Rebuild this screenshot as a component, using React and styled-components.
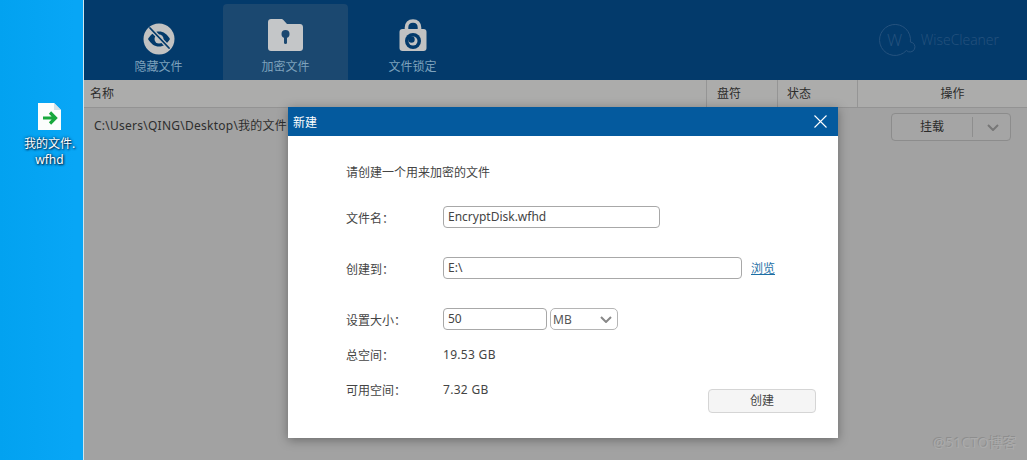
import React from "react";
import styled, { createGlobalStyle } from "styled-components";

const cjk = `"Noto Sans", "Noto Sans CJK SC", sans-serif`;

const Global = createGlobalStyle`
  html, body { margin: 0; padding: 0; background: #a2a2a2; }
  body { font-family: ${cjk}; font-size: 12px; }
  * { box-sizing: border-box; }
`;

const Page = styled.div`
  width: 1027px; height: 460px; display: flex; overflow: hidden; position: relative;
`;
const Desktop = styled.div`
  width: 84px; flex: none; background: linear-gradient(90deg, #02a2f0, #08a6f6 90%);
  border-right: 1px solid #cfe6ee;
  display: flex; flex-direction: column; align-items: center;
  height: 100%;
  padding: 103px 0 0 16px;
`;
const DeskLabel = styled.div`
  color: #fff; font-size: 12px; line-height: 16px; text-align: center; margin-top: 6px; width: 66px;
  text-shadow: 0 0 3px #024, 1px 1px 2px #024;
`;
const AppArea = styled.div`
  flex: 1; display: flex; flex-direction: column; min-width: 0;
`;
const TopBar = styled.div`
  height: 80px; background: #033a6b; display: flex; align-items: flex-end; padding-left: 12px; flex: none;
  justify-content: space-between;
`;
const Tabs = styled.div`display: flex; gap: 2px;`;
const Tab = styled.div`
  width: 125px; height: 76px; display: flex; flex-direction: column; align-items: center;
  padding-top: 13px;
  border-radius: 4px 4px 0 0;
  color: #7ea2bc; font-size: 12px; line-height: 16px;
  background: ${p => (p.$active ? "#1b4870" : "transparent")};
`;
const TabIcon = styled.div`
  height: 39px; display: flex; align-items: flex-start; justify-content: center; margin-bottom: 3px;
  padding-top: ${p => p.$pad}px;
`;
const Logo = styled.div`
  display: flex; align-items: center; gap: 5px; margin: 0 28px 23px 0; color: #25527e;
  font-family: "Open Sans", sans-serif; font-weight: 300; font-size: 14px; line-height: 20px;
`;
const HeaderRow = styled.div`
  height: 28px; background: #acacab; border-bottom: 1px solid #939393; display: grid;
  grid-template-columns: 623px 71px 80px 1fr; flex: none;
  color: #2c2c2c; line-height: 28px;
`;
const HeadCell = styled.div`
  padding-left: ${p => p.$pl}px;
  text-align: ${p => (p.$center ? "center" : "left")};
  border-right: ${p => (p.$last ? "none" : "1px solid #959595")};
  overflow: hidden;
`;
const BodyRow = styled.div`
  flex: 1; background: #a2a2a2; display: flex; align-items: flex-start; justify-content: space-between;
  padding: 5px 16px 0 10px; color: #2e2e2e;
`;
const PathText = styled.div`line-height: 16px; margin-top: 5px; letter-spacing: .25px;`;
const Split = styled.div`
  width: 120px; height: 28px; border: 1px solid #8c8c8c; border-radius: 4px; display: flex; align-items: center; background: #a5a5a5;
`;
const SplitMain = styled.div`flex: 1; text-align: center; border-right: 1px solid #8e8e8e; line-height: 20px; height: 20px; color: #2a2a2a;`;
const SplitArrow = styled.div`width: 37px; display: flex; justify-content: center; align-items: center; padding-left: 3px;`;

const Modal = styled.div`
  position: absolute; left: 288px; top: 107px; width: 550px; height: 331px; background: #fff;
  box-shadow: 0 2px 10px rgba(0,0,0,.35); display: flex; flex-direction: column;
`;
const ModalTitle = styled.div`
  height: 29px; background: #045a9e; color: #fff; display: flex; align-items: center; justify-content: space-between;
  padding: 0 11px 0 5px; font-size: 12px; flex: none;
`;
const ModalBody = styled.div`
  flex: 1; padding: 28px 22px 0 58px; color: #444; display: flex; flex-direction: column; position: relative;
`;
const Intro = styled.div`line-height: 17px; height: 17px; margin-bottom: 25px;`;
const Row = styled.div`
  display: flex; align-items: center; height: ${p => p.$h}px; margin-bottom: ${p => p.$mb || 0}px;
`;
const Label = styled.div`width: 97px; flex: none; padding-top: 1px;`;
const Input = styled.div`
  width: ${p => p.$w}px; height: 22px; border: 1px solid #a8a8a8; border-radius: 4px; padding: 0 4px;
  line-height: 19px; font-size: 12px; color: #444;
`;
const Browse = styled.a`
  margin-left: 9px; padding-top: 2px; color: #1d6fa5; text-decoration: underline; line-height: 16px;
`;
const Select = styled.div`
  width: 68px; height: 22px; border: 1px solid #b5b5b5; border-radius: 5px; margin-left: 3px;
  display: flex; align-items: center; justify-content: space-between; padding: 0 5px 0 2px; color: #555; line-height: 19px;
`;
const Value = styled.div`color: #444; letter-spacing: .3px;`;
const CreateButton = styled.div`
  position: absolute; right: 22px; bottom: 25px; width: 108px; height: 24px; background: #f5f5f5; border: 1px solid #d5d5d5;
  border-radius: 4px; text-align: center; line-height: 21px; color: #444;
`;
const Watermark = styled.div`
  position: absolute; right: 10px; bottom: 8px; color: #ababab; font-size: 14px; line-height: 18px;
  text-shadow: -1px -1px 0 #8e8e8e;
`;

const FileIcon = () => (
  <svg width="23" height="27" viewBox="0 0 23 27">
    <path d="M0 0H16L23 7V27H0Z" fill="#fbfdfc" />
    <path d="M16 0L23 7H16Z" fill="#d6e2e8" />
    <path d="M5 15H17M12 9.500L17.500 15L12 20.500" fill="none" stroke="#17a83c" strokeWidth="3.200" />
  </svg>
);
const EyeIcon = () => (
  <svg width="32" height="32" viewBox="0 0 32 32">
    <circle cx="16" cy="16" r="15.500" fill="#c2c2c2" />
    <path d="M5 16C8 11 11.500 8.500 16 8.500S24 11 27 16C24 21 20.500 23.500 16 23.500S8 21 5 16Z" fill="#033a6b" />
    <circle cx="16" cy="16" r="4.500" fill="#c2c2c2" />
    <path d="M7 5L26 25" stroke="#c2c2c2" strokeWidth="4" />
    <path d="M7 5L26 25" stroke="#033a6b" strokeWidth="1.800" strokeLinecap="round" />
  </svg>
);
const FolderIcon = () => (
  <svg width="35" height="32" viewBox="0 0 35 32">
    <path d="M3 0H13C14 0 15 .5 15.600 1.200L19 5H32C33.700 5 35 6.300 35 8V29C35 30.700 33.700 32 32 32H3C1.300 32 0 30.700 0 29V3C0 1.300 1.300 0 3 0Z" fill="#c4c6c8" />
    <circle cx="17.500" cy="15" r="4" fill="#1b4870" />
    <rect x="16" y="15" width="3" height="10" rx="1.500" fill="#1b4870" />
  </svg>
);
const LockIcon = () => (
  <svg width="28" height="32" viewBox="0 0 28 32">
    <path d="M7.500 12V8.500C7.500 4.500 10 2 14 2S20.500 4.500 20.500 8.500V12" fill="none" stroke="#c2c2c2" strokeWidth="3.600" />
    <rect x=".5" y="10" width="27" height="22" rx="3" fill="#c2c2c2" />
    <circle cx="14" cy="22" r="8" fill="#033a6b" />
    <circle cx="14" cy="22" r="4.500" fill="#c2c2c2" />
    <circle cx="12.500" cy="20.500" r="3.200" fill="#033a6b" />
  </svg>
);
const LogoMark = () => (
  <svg width="38" height="34" viewBox="0 0 38 34" fill="none" stroke="#25527e" strokeWidth="1">
    <path d="M32.400 19A15.500 15.500 0 1 0 28.400 27.500A5 5 0 1 0 32.400 19Z" />
    <text x="9" y="23" fontFamily="Open Sans, sans-serif" fontSize="17" fontWeight="300" fill="#25527e" stroke="none">W</text>
  </svg>
);
const Chevron = ({ c = "#777" }) => (
  <svg width="12" height="7" viewBox="0 0 12 7" fill="none" stroke={c} strokeWidth="2">
    <path d="M1 1L6 6L11 1" />
  </svg>
);
const CloseIcon = () => (
  <svg width="13" height="13" viewBox="0 0 13 13" stroke="#fff" strokeWidth="1.100">
    <path d="M.5.5L12.500 12.500M12.500.5L.5 12.500" />
  </svg>
);

export default function App() {
  return (
    <Page>
      <Global />
      <Desktop>
        <FileIcon />
        <DeskLabel>我的文件.<br />wfhd</DeskLabel>
      </Desktop>
      <AppArea>
        <TopBar>
          <Tabs>
            <Tab><TabIcon $pad={6}><EyeIcon /></TabIcon>隐藏文件</Tab>
            <Tab $active><TabIcon $pad={2}><FolderIcon /></TabIcon>加密文件</Tab>
            <Tab><TabIcon $pad={2}><LockIcon /></TabIcon>文件锁定</Tab>
          </Tabs>
          <Logo><LogoMark />WiseCleaner</Logo>
        </TopBar>
        <HeaderRow>
          <HeadCell $pl={6}>名称</HeadCell>
          <HeadCell $pl={10}>盘符</HeadCell>
          <HeadCell $pl={9}>状态</HeadCell>
          <HeadCell $center $last $pl={20}>操作</HeadCell>
        </HeaderRow>
        <BodyRow>
          <PathText>C:\Users\QING\Desktop\我的文件</PathText>
          <Split>
            <SplitMain>挂载</SplitMain>
            <SplitArrow><Chevron /></SplitArrow>
          </Split>
        </BodyRow>
      </AppArea>
      <Modal>
        <ModalTitle>新建<CloseIcon /></ModalTitle>
        <ModalBody>
          <Intro>请创建一个用来加密的文件</Intro>
          <Row $h={22} $mb={29}><Label>文件名：</Label><Input $w={217}>EncryptDisk.wfhd</Input></Row>
          <Row $h={22} $mb={29}><Label>创建到：</Label><Input $w={299}>E:\</Input><Browse>浏览</Browse></Row>
          <Row $h={22} $mb={14}><Label>设置大小：</Label><Input $w={104}>50</Input><Select>MB<Chevron c="#888" /></Select></Row>
          <Row $h={20} $mb={15}><Label>总空间：</Label><Value>19.53 GB</Value></Row>
          <Row $h={20}><Label>可用空间：</Label><Value>7.32 GB</Value></Row>
          <CreateButton>创建</CreateButton>
        </ModalBody>
      </Modal>
      <Watermark>@51CTO博客</Watermark>
    </Page>
  );
}
